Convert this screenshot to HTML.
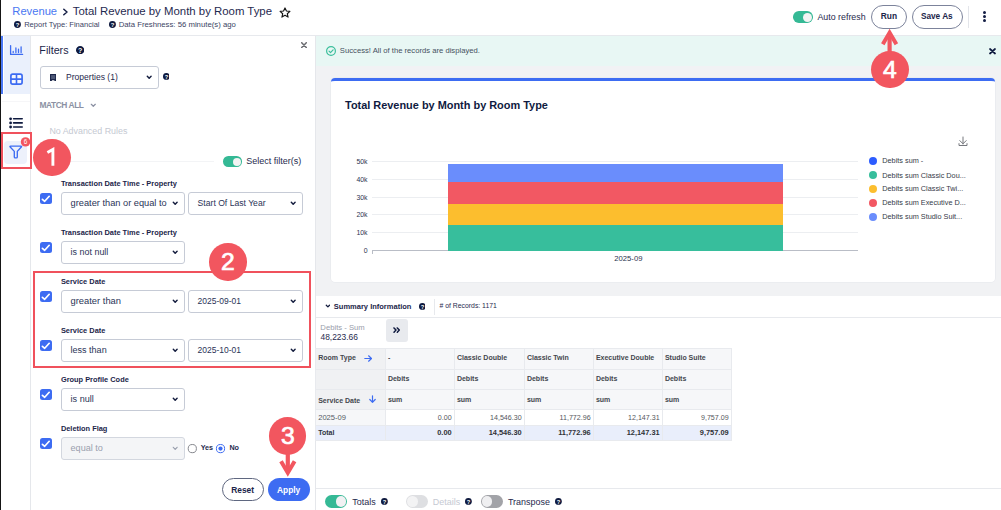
<!DOCTYPE html>
<html><head><meta charset="utf-8">
<style>
*{box-sizing:border-box;margin:0;padding:0}
html,body{width:1001px;height:510px;overflow:hidden;background:#fff;font-family:"Liberation Sans",sans-serif}
.a{position:absolute;white-space:nowrap}
.t{line-height:1}
</style></head><body>
<div class="a" style="left:0px;top:0px;width:1.3px;height:510px;background:#151515"></div>
<div class="a" style="left:1px;top:35px;width:1000px;height:1px;background:#e7e9ed"></div>
<div class="a t" style="left:12.32px;top:6.00px;font-size:11.2px;color:#4a78f2;font-weight:normal;">Revenue</div>
<svg class="a" style="left:62px;top:8px" width="7" height="8" viewBox="0 0 7 8"><path d="M1.8 1.2L5 4L1.8 6.8" fill="none" stroke="#141e45" stroke-width="1.5" stroke-linecap="round" stroke-linejoin="round"/></svg>
<div class="a t" style="left:72.80px;top:6.00px;font-size:11.4px;color:#1f2a50;font-weight:normal;">Total Revenue by Month by Room Type</div>
<svg class="a" style="left:279px;top:6.5px" width="12" height="11" viewBox="0 0 24 22"><path d="M12 1.8l2.9 6.3 6.9.7-5.2 4.6 1.5 6.8L12 16.7l-6.1 3.5 1.5-6.8-5.2-4.6 6.9-.7z" fill="none" stroke="#141414" stroke-width="2.3" stroke-linejoin="round"/></svg>
<svg class="a" style="left:14.2px;top:20.9px" width="6.9" height="6.9" viewBox="0 0 20 20"><circle cx="10" cy="10" r="10" fill="#0f1a3f"/><text x="10.2" y="16.3" text-anchor="middle" font-family="Liberation Sans" font-weight="bold" font-size="17" fill="#fff">?</text></svg>
<div class="a t" style="left:24.17px;top:21.00px;font-size:7.55px;color:#3b4463;font-weight:normal;">Report Type: Financial</div>
<svg class="a" style="left:108.7px;top:20.9px" width="6.9" height="6.9" viewBox="0 0 20 20"><circle cx="10" cy="10" r="10" fill="#0f1a3f"/><text x="10.2" y="16.3" text-anchor="middle" font-family="Liberation Sans" font-weight="bold" font-size="17" fill="#fff">?</text></svg>
<div class="a t" style="left:118.66px;top:21.00px;font-size:7.75px;color:#3b4463;font-weight:normal;">Data Freshness: 56 minute(s) ago</div>
<div class="a" style="left:793px;top:11.4px;width:20px;height:11.7px;border-radius:5.85px;background:#35b995"></div>
<div class="a" style="left:802.5px;top:12.6px;width:9.299999999999999px;height:9.299999999999999px;border-radius:50%;background:#f3f3f3"></div>
<div class="a t" style="left:817.48px;top:13.00px;font-size:8.83px;color:#1f2a4e;font-weight:normal;">Auto refresh</div>
<div class="a" style="left:871.2px;top:5.2px;width:35.8px;height:23.4px;border:1px solid #7c839b;border-radius:12px"></div>
<div class="a t" style="left:880.81px;top:12.00px;font-size:8.4px;color:#1b2549;font-weight:bold;">Run</div>
<div class="a" style="left:911.9px;top:5.2px;width:50.9px;height:23.4px;border:1px solid #7c839b;border-radius:12px"></div>
<div class="a t" style="left:920.92px;top:13.00px;font-size:8.25px;color:#1b2549;font-weight:bold;">Save As</div>
<div class="a" style="left:968px;top:6px;width:1px;height:22px;background:#e3e5ea"></div>
<div class="a" style="left:983px;top:11.1px;width:3px;height:3px;border-radius:50%;background:#141e45"></div>
<div class="a" style="left:983px;top:14.899999999999999px;width:3px;height:3px;border-radius:50%;background:#141e45"></div>
<div class="a" style="left:983px;top:18.7px;width:3px;height:3px;border-radius:50%;background:#141e45"></div>
<div class="a" style="left:4.2px;top:36px;width:25.8px;height:58px;background:#eaf0fc"></div>
<div class="a" style="left:1px;top:36px;width:2px;height:58px;background:#4a78f5"></div>
<div class="a" style="left:2px;top:100.5px;width:28px;height:1px;background:#f6f6f8"></div>
<div class="a" style="left:30px;top:36px;width:1px;height:474px;background:#e5e7eb"></div>
<svg class="a" style="left:0px;top:36px" width="30" height="58" viewBox="0 36 30 58"><path d="M10.6 45.6V54.4H22.6" fill="none" stroke="#3d6cf2" stroke-width="1.3" stroke-linecap="round" stroke-linejoin="round"/><path d="M13.2 52.6V51.4M15.9 52.6V47.9M18.5 52.6V49.2M21.1 52.6V46.8" stroke="#3d6cf2" stroke-width="1.3" stroke-linecap="round"/><rect x="10.9" y="74.1" width="11.2" height="10" rx="1.8" fill="#fff" fill-opacity="0.55" stroke="#3d6cf2" stroke-width="1.7"/><path d="M16.5 74.1v10M10.9 79.1h11.2" stroke="#3d6cf2" stroke-width="1.6"/></svg>
<svg class="a" style="left:8.7px;top:117.2px" width="14" height="12" viewBox="0 0 14 12"><circle cx="1.6" cy="1.8" r="1.4" fill="#0f1a3f"/><circle cx="1.6" cy="5.9" r="1.4" fill="#0f1a3f"/><circle cx="1.6" cy="10" r="1.4" fill="#0f1a3f"/><path d="M4.6 1.8H13.2M4.6 5.9H13.2M4.6 10H13.2" stroke="#0f1a3f" stroke-width="1.6" stroke-linecap="round"/></svg>
<div class="a" style="left:4.2px;top:140.6px;width:22.7px;height:23.4px;border-radius:4px;background:#edf1fb"></div>
<svg class="a" style="left:0px;top:130px" width="30" height="35" viewBox="0 130 30 35"><path d="M10.6 146.1H20.9Q22 146.1 21.3 147L17.3 151.4V157Q17.3 157.9 16.4 157.9H15.2Q14.3 157.9 14.3 157V151.4L10.2 147Q9.5 146.1 10.6 146.1z" fill="none" stroke="#3d6cf2" stroke-width="1.35" stroke-linejoin="round"/></svg>
<svg class="a" style="left:20px;top:136px" width="11" height="11" viewBox="0 0 11 11"><circle cx="5.5" cy="5.9" r="4.7" fill="#f2565f"/><text x="5.5" y="8.2" text-anchor="middle" font-family="Liberation Sans" font-size="6.3" fill="#fff">6</text></svg>
<div class="a" style="left:1px;top:131.6px;width:31px;height:37.2px;border:2px solid #f0515c"></div>
<div class="a" style="left:315px;top:36px;width:1px;height:474px;background:#e5e7eb"></div>
<div class="a t" style="left:39.35px;top:45.00px;font-size:10.73px;color:#1b2549;font-weight:normal;">Filters</div>
<svg class="a" style="left:75.9px;top:45.5px" width="8.3" height="8.3" viewBox="0 0 20 20"><circle cx="10" cy="10" r="10" fill="#0f1a3f"/><text x="10.2" y="16.3" text-anchor="middle" font-family="Liberation Sans" font-weight="bold" font-size="17" fill="#fff">?</text></svg>
<svg class="a" style="left:301.3px;top:41.6px" width="6" height="6.2" viewBox="0 0 6 6.2"><path d="M0.7 0.7L5.3 5.5M5.3 0.7L0.7 5.5" stroke="#6a6b70" stroke-width="1.5" stroke-linecap="round"/></svg>
<div class="a" style="left:40.2px;top:66.3px;width:118.5px;height:22.4px;border:1px solid #c6cbd6;border-radius:3px"></div>
<svg class="a" style="left:50px;top:73.8px" width="6.3" height="7.4" viewBox="0 0 6.3 7.4"><path d="M0 0.3Q0 0 0.3 0H6Q6.3 0 6.3 0.3V7.4H4.4V6.2H1.9V7.4H0z" fill="#1b2549"/><rect x="1.1" y="1.1" width="4.1" height="4" fill="#4f5978"/></svg>
<div class="a t" style="left:66.00px;top:73.00px;font-size:8.55px;color:#1f2a4e;font-weight:normal;">Properties (1)</div>
<svg class="a" style="left:145.6px;top:75.3px" width="6.4" height="4.6" viewBox="-1 -1 6.4 4.6"><path d="M0.3 0.3L2.2 2.3000000000000003L4.1000000000000005 0.3" fill="none" stroke="#111a3c" stroke-width="1.4" stroke-linecap="round" stroke-linejoin="round"/></svg>
<svg class="a" style="left:162.6px;top:73.3px" width="6.8" height="6.8" viewBox="0 0 20 20"><circle cx="10" cy="10" r="10" fill="#0f1a3f"/><text x="10.2" y="16.3" text-anchor="middle" font-family="Liberation Sans" font-weight="bold" font-size="17" fill="#fff">?</text></svg>
<div class="a t" style="left:39.41px;top:101.00px;font-size:8.4px;color:#8b91a3;font-weight:bold;letter-spacing:-0.42px">MATCH ALL</div>
<svg class="a" style="left:89.5px;top:102.5px" width="6.6" height="4.6" viewBox="-1 -1 6.6 4.6"><path d="M0.3 0.3L2.3 2.3000000000000003L4.3 0.3" fill="none" stroke="#8b91a3" stroke-width="1.2" stroke-linecap="round" stroke-linejoin="round"/></svg>
<div class="a t" style="left:49.38px;top:127.00px;font-size:8.88px;color:#c5c9d2;font-weight:normal;">No Advanced Rules</div>
<div class="a" style="left:70px;top:160.5px;width:144px;height:1px;background:#f3f4f6"></div>
<div class="a" style="left:223.3px;top:156.3px;width:18.6px;height:10.6px;border-radius:5.3px;background:#35b995"></div>
<div class="a" style="left:232.50000000000003px;top:157.5px;width:8.2px;height:8.2px;border-radius:50%;background:#f3f3f3"></div>
<div class="a t" style="left:246.17px;top:157.00px;font-size:9.03px;color:#1f2a4e;font-weight:normal;">Select filter(s)</div>
<div class="a t" style="left:60.88px;top:180.00px;font-size:7.42px;color:#1b2549;font-weight:bold;">Transaction Date Time - Property</div>
<div class="a" style="left:40.2px;top:192.5px;width:11.7px;height:11.5px;border-radius:2.5px;background:#3d6cf2"></div>
<svg class="a" style="left:40.2px;top:192.5px" width="11.7" height="11.5" viewBox="0 0 11.7 11.5"><path d="M2.4 6.3L4.7 8.3L9.2 3.3" fill="none" stroke="#fff" stroke-width="1.7" stroke-linecap="round" stroke-linejoin="round"/></svg>
<div class="a" style="left:61px;top:192px;width:124px;height:23px;border:1px solid #c6cbd6;border-radius:3px;background:#fff"></div>
<div class="a t" style="left:70.55px;top:199.00px;font-size:9.26px;color:#2a3457;font-weight:normal;">greater than or equal to</div>
<svg class="a" style="left:171.7px;top:200.8px" width="6.4" height="4.6" viewBox="-1 -1 6.4 4.6"><path d="M0.3 0.3L2.2 2.3000000000000003L4.1000000000000005 0.3" fill="none" stroke="#111a3c" stroke-width="1.4" stroke-linecap="round" stroke-linejoin="round"/></svg>
<div class="a" style="left:188px;top:192px;width:115px;height:23px;border:1px solid #c6cbd6;border-radius:3px;background:#fff"></div>
<div class="a t" style="left:197.60px;top:199.00px;font-size:8.62px;color:#2a3457;font-weight:normal;">Start Of Last Year</div>
<svg class="a" style="left:289.7px;top:200.8px" width="6.4" height="4.6" viewBox="-1 -1 6.4 4.6"><path d="M0.3 0.3L2.2 2.3000000000000003L4.1000000000000005 0.3" fill="none" stroke="#111a3c" stroke-width="1.4" stroke-linecap="round" stroke-linejoin="round"/></svg>
<div class="a t" style="left:60.88px;top:229.00px;font-size:7.42px;color:#1b2549;font-weight:bold;">Transaction Date Time - Property</div>
<div class="a" style="left:40.2px;top:241.5px;width:11.7px;height:11.5px;border-radius:2.5px;background:#3d6cf2"></div>
<svg class="a" style="left:40.2px;top:241.5px" width="11.7" height="11.5" viewBox="0 0 11.7 11.5"><path d="M2.4 6.3L4.7 8.3L9.2 3.3" fill="none" stroke="#fff" stroke-width="1.7" stroke-linecap="round" stroke-linejoin="round"/></svg>
<div class="a" style="left:61px;top:241px;width:124px;height:23px;border:1px solid #c6cbd6;border-radius:3px;background:#fff"></div>
<div class="a t" style="left:70.57px;top:248.00px;font-size:8.95px;color:#2a3457;font-weight:normal;">is not null</div>
<svg class="a" style="left:171.7px;top:249.8px" width="6.4" height="4.6" viewBox="-1 -1 6.4 4.6"><path d="M0.3 0.3L2.2 2.3000000000000003L4.1000000000000005 0.3" fill="none" stroke="#111a3c" stroke-width="1.4" stroke-linecap="round" stroke-linejoin="round"/></svg>
<div class="a t" style="left:60.88px;top:278.00px;font-size:7.42px;color:#1b2549;font-weight:bold;">Service Date</div>
<div class="a" style="left:40.2px;top:290.5px;width:11.7px;height:11.5px;border-radius:2.5px;background:#3d6cf2"></div>
<svg class="a" style="left:40.2px;top:290.5px" width="11.7" height="11.5" viewBox="0 0 11.7 11.5"><path d="M2.4 6.3L4.7 8.3L9.2 3.3" fill="none" stroke="#fff" stroke-width="1.7" stroke-linecap="round" stroke-linejoin="round"/></svg>
<div class="a" style="left:61px;top:290px;width:124px;height:23px;border:1px solid #c6cbd6;border-radius:3px;background:#fff"></div>
<div class="a t" style="left:70.54px;top:297.00px;font-size:9.37px;color:#2a3457;font-weight:normal;">greater than</div>
<svg class="a" style="left:171.7px;top:298.8px" width="6.4" height="4.6" viewBox="-1 -1 6.4 4.6"><path d="M0.3 0.3L2.2 2.3000000000000003L4.1000000000000005 0.3" fill="none" stroke="#111a3c" stroke-width="1.4" stroke-linecap="round" stroke-linejoin="round"/></svg>
<div class="a" style="left:188px;top:290px;width:115px;height:23px;border:1px solid #c6cbd6;border-radius:3px;background:#fff"></div>
<div class="a t" style="left:197.60px;top:297.00px;font-size:8.5px;color:#2a3457;font-weight:normal;">2025-09-01</div>
<svg class="a" style="left:289.7px;top:298.8px" width="6.4" height="4.6" viewBox="-1 -1 6.4 4.6"><path d="M0.3 0.3L2.2 2.3000000000000003L4.1000000000000005 0.3" fill="none" stroke="#111a3c" stroke-width="1.4" stroke-linecap="round" stroke-linejoin="round"/></svg>
<div class="a t" style="left:60.88px;top:327.00px;font-size:7.42px;color:#1b2549;font-weight:bold;">Service Date</div>
<div class="a" style="left:40.2px;top:339.5px;width:11.7px;height:11.5px;border-radius:2.5px;background:#3d6cf2"></div>
<svg class="a" style="left:40.2px;top:339.5px" width="11.7" height="11.5" viewBox="0 0 11.7 11.5"><path d="M2.4 6.3L4.7 8.3L9.2 3.3" fill="none" stroke="#fff" stroke-width="1.7" stroke-linecap="round" stroke-linejoin="round"/></svg>
<div class="a" style="left:61px;top:339px;width:124px;height:23px;border:1px solid #c6cbd6;border-radius:3px;background:#fff"></div>
<div class="a t" style="left:70.57px;top:346.00px;font-size:9.02px;color:#2a3457;font-weight:normal;">less than</div>
<svg class="a" style="left:171.7px;top:347.8px" width="6.4" height="4.6" viewBox="-1 -1 6.4 4.6"><path d="M0.3 0.3L2.2 2.3000000000000003L4.1000000000000005 0.3" fill="none" stroke="#111a3c" stroke-width="1.4" stroke-linecap="round" stroke-linejoin="round"/></svg>
<div class="a" style="left:188px;top:339px;width:115px;height:23px;border:1px solid #c6cbd6;border-radius:3px;background:#fff"></div>
<div class="a t" style="left:197.60px;top:346.00px;font-size:8.5px;color:#2a3457;font-weight:normal;">2025-10-01</div>
<svg class="a" style="left:289.7px;top:347.8px" width="6.4" height="4.6" viewBox="-1 -1 6.4 4.6"><path d="M0.3 0.3L2.2 2.3000000000000003L4.1000000000000005 0.3" fill="none" stroke="#111a3c" stroke-width="1.4" stroke-linecap="round" stroke-linejoin="round"/></svg>
<div class="a t" style="left:60.88px;top:376.00px;font-size:7.42px;color:#1b2549;font-weight:bold;">Group Profile Code</div>
<div class="a" style="left:40.2px;top:388.5px;width:11.7px;height:11.5px;border-radius:2.5px;background:#3d6cf2"></div>
<svg class="a" style="left:40.2px;top:388.5px" width="11.7" height="11.5" viewBox="0 0 11.7 11.5"><path d="M2.4 6.3L4.7 8.3L9.2 3.3" fill="none" stroke="#fff" stroke-width="1.7" stroke-linecap="round" stroke-linejoin="round"/></svg>
<div class="a" style="left:61px;top:388px;width:124px;height:23px;border:1px solid #c6cbd6;border-radius:3px;background:#fff"></div>
<div class="a t" style="left:70.56px;top:395.00px;font-size:9.1px;color:#2a3457;font-weight:normal;">is null</div>
<svg class="a" style="left:171.7px;top:396.8px" width="6.4" height="4.6" viewBox="-1 -1 6.4 4.6"><path d="M0.3 0.3L2.2 2.3000000000000003L4.1000000000000005 0.3" fill="none" stroke="#111a3c" stroke-width="1.4" stroke-linecap="round" stroke-linejoin="round"/></svg>
<div class="a t" style="left:60.88px;top:425.00px;font-size:7.42px;color:#1b2549;font-weight:bold;">Deletion Flag</div>
<div class="a" style="left:40.2px;top:437.5px;width:11.7px;height:11.5px;border-radius:2.5px;background:#3d6cf2"></div>
<svg class="a" style="left:40.2px;top:437.5px" width="11.7" height="11.5" viewBox="0 0 11.7 11.5"><path d="M2.4 6.3L4.7 8.3L9.2 3.3" fill="none" stroke="#fff" stroke-width="1.7" stroke-linecap="round" stroke-linejoin="round"/></svg>
<div class="a" style="left:61px;top:437px;width:124px;height:23px;border:1px solid #d3d7df;border-radius:3px;background:#f4f5f7"></div>
<div class="a t" style="left:70.56px;top:444.00px;font-size:9.1px;color:#9aa0ae;font-weight:normal;">equal to</div>
<svg class="a" style="left:171.7px;top:445.8px" width="6.4" height="4.6" viewBox="-1 -1 6.4 4.6"><path d="M0.3 0.3L2.2 2.3000000000000003L4.1000000000000005 0.3" fill="none" stroke="#9aa0ae" stroke-width="1.2" stroke-linecap="round" stroke-linejoin="round"/></svg>
<svg class="a" style="left:187px;top:443px" width="11" height="11" viewBox="0 0 11 11"><circle cx="5.3" cy="5.6" r="4.1" fill="#fff" stroke="#85878d" stroke-width="1"/></svg>
<div class="a t" style="left:200.70px;top:444.00px;font-size:7.2px;color:#1f2a4e;font-weight:bold;">Yes</div>
<svg class="a" style="left:215px;top:443px" width="11" height="11" viewBox="0 0 11 11"><circle cx="5.5" cy="5.6" r="4.1" fill="#fff" stroke="#3d6cf2" stroke-width="1"/><circle cx="5.5" cy="5.6" r="2.1" fill="#3d6cf2"/></svg>
<div class="a t" style="left:229.40px;top:444.00px;font-size:7.2px;color:#1f2a4e;font-weight:bold;">No</div>
<div class="a" style="left:221.6px;top:478.4px;width:42.4px;height:23px;border:1px solid #5f6780;border-radius:12px"></div>
<div class="a t" style="left:231.21px;top:486.00px;font-size:8.4px;color:#1b2549;font-weight:bold;">Reset</div>
<div class="a" style="left:267.9px;top:478.4px;width:42.1px;height:23px;border-radius:12px;background:#3d6cf2"></div>
<div class="a t" style="left:277.01px;top:486.00px;font-size:8.4px;color:#fff;font-weight:bold;">Apply</div>
<div class="a" style="left:316px;top:36px;width:685px;height:30px;background:#e8f7f4"></div>
<div class="a" style="left:316px;top:66px;width:685px;height:230px;background:#f1f2f4"></div>
<svg class="a" style="left:325.5px;top:45.8px" width="10" height="10" viewBox="0 0 10 10"><circle cx="5" cy="5" r="4.4" fill="none" stroke="#3cbf9c" stroke-width="1.2"/><path d="M3 5.1l1.5 1.5L7.1 3.9" fill="none" stroke="#3cbf9c" stroke-width="1.2" stroke-linecap="round" stroke-linejoin="round"/></svg>
<div class="a t" style="left:339.86px;top:47.00px;font-size:7.66px;color:#46505e;font-weight:normal;">Success! All of the records are displayed.</div>
<svg class="a" style="left:988.5px;top:48px" width="7" height="6.5" viewBox="0 0 7 6.5"><path d="M1 1L6 5.5M6 1L1 5.5" stroke="#0f1a3f" stroke-width="1.7" stroke-linecap="round"/></svg>
<div class="a" style="left:330.8px;top:77.8px;width:664.6px;height:204px;background:#fff;border-radius:4px;box-shadow:0 0 0 0.6px #e6e8ec"></div>
<div class="a" style="left:330.8px;top:78.2px;width:664.6px;height:5px;border-top:3px solid #3d6cf2;border-radius:4px 4px 0 0"></div>
<div class="a t" style="left:345.03px;top:100.00px;font-size:10.93px;color:#0f1a3f;font-weight:bold;">Total Revenue by Month by Room Type</div>
<svg class="a" style="left:957.5px;top:136px" width="10" height="10.5" viewBox="0 0 10 10.5"><path d="M5 1v7M1.8 4.6L5 7.8L8.2 4.6M1 7.6v1.9h8V7.6" fill="none" stroke="#6f7177" stroke-width="0.95" stroke-linecap="round" stroke-linejoin="round"/></svg>
<div class="a" style="left:372px;top:160.7px;width:486.3px;height:1px;background:#eceef1"></div>
<div class="a" style="left:372px;top:178.6px;width:486.3px;height:1px;background:#eceef1"></div>
<div class="a" style="left:372px;top:196.5px;width:486.3px;height:1px;background:#eceef1"></div>
<div class="a" style="left:372px;top:214.4px;width:486.3px;height:1px;background:#eceef1"></div>
<div class="a" style="left:372px;top:232.3px;width:486.3px;height:1px;background:#eceef1"></div>
<div class="a" style="left:372px;top:250.2px;width:486.3px;height:1px;background:#b9bdc6"></div>
<div class="a" style="left:371.6px;top:250.2px;width:1px;height:4px;background:#b9bdc6"></div>
<div class="a t" style="right:633.50px;top:159.00px;font-size:6.9px;color:#2c3550;font-weight:normal;text-align:right;">50k</div>
<div class="a t" style="right:633.50px;top:177.00px;font-size:6.9px;color:#2c3550;font-weight:normal;text-align:right;">40k</div>
<div class="a t" style="right:633.50px;top:195.00px;font-size:6.9px;color:#2c3550;font-weight:normal;text-align:right;">30k</div>
<div class="a t" style="right:633.50px;top:212.00px;font-size:6.9px;color:#2c3550;font-weight:normal;text-align:right;">20k</div>
<div class="a t" style="right:633.50px;top:230.00px;font-size:6.9px;color:#2c3550;font-weight:normal;text-align:right;">10k</div>
<div class="a t" style="right:633.50px;top:248.00px;font-size:6.9px;color:#2c3550;font-weight:normal;text-align:right;">0</div>
<div class="a" style="left:447.5px;top:164.4px;width:335.2px;height:17.599999999999994px;background:#6a8dfc"></div>
<div class="a" style="left:447.5px;top:182.0px;width:335.2px;height:21.599999999999994px;background:#f25863"></div>
<div class="a" style="left:447.5px;top:203.6px;width:335.2px;height:21.099999999999994px;background:#fcbe2e"></div>
<div class="a" style="left:447.5px;top:224.7px;width:335.2px;height:26.0px;background:#37be9c"></div>
<div class="a t" style="left:614.26px;top:255.00px;font-size:7.7px;color:#2c3550;font-weight:normal;">2025-09</div>
<div class="a" style="left:868.5px;top:157px;width:8px;height:8px;border-radius:50%;background:#2c5cff"></div>
<div class="a t" style="left:882.29px;top:157.00px;font-size:7.3px;color:#353a48;font-weight:normal;">Debits sum -</div>
<div class="a" style="left:868.5px;top:171.2px;width:8px;height:8px;border-radius:50%;background:#37be9c"></div>
<div class="a t" style="left:882.29px;top:172.00px;font-size:7.3px;color:#353a48;font-weight:normal;">Debits sum Classic Dou...</div>
<div class="a" style="left:868.5px;top:185px;width:8px;height:8px;border-radius:50%;background:#fcbe2e"></div>
<div class="a t" style="left:882.29px;top:185.00px;font-size:7.3px;color:#353a48;font-weight:normal;">Debits sum Classic Twi...</div>
<div class="a" style="left:868.5px;top:198.7px;width:8px;height:8px;border-radius:50%;background:#f25863"></div>
<div class="a t" style="left:882.29px;top:199.00px;font-size:7.3px;color:#353a48;font-weight:normal;">Debits sum Executive D...</div>
<div class="a" style="left:868.5px;top:212.6px;width:8px;height:8px;border-radius:50%;background:#6a8dfc"></div>
<div class="a t" style="left:882.29px;top:213.00px;font-size:7.3px;color:#353a48;font-weight:normal;">Debits sum Studio Suit...</div>
<div class="a" style="left:316px;top:317px;width:685px;height:1px;background:#e7e9ed"></div>
<svg class="a" style="left:324.6px;top:304.2px" width="5.8" height="4.2" viewBox="-1 -1 5.8 4.2"><path d="M0.3 0.3L1.9 1.9000000000000001L3.5 0.3" fill="none" stroke="#111a3c" stroke-width="1.3" stroke-linecap="round" stroke-linejoin="round"/></svg>
<div class="a t" style="left:333.87px;top:303.00px;font-size:7.51px;color:#1b2549;font-weight:bold;">Summary Information</div>
<svg class="a" style="left:418.6px;top:303.4px" width="6.8" height="6.8" viewBox="0 0 20 20"><circle cx="10" cy="10" r="10" fill="#0f1a3f"/><text x="10.2" y="16.3" text-anchor="middle" font-family="Liberation Sans" font-weight="bold" font-size="17" fill="#fff">?</text></svg>
<div class="a" style="left:434px;top:299px;width:1px;height:15.5px;background:#e7e9ed"></div>
<div class="a t" style="left:439.52px;top:303.00px;font-size:6.85px;color:#1f2a4e;font-weight:normal;"># of Records: 1171</div>
<div class="a t" style="left:320.36px;top:324.00px;font-size:7.68px;color:#999eab;font-weight:normal;">Debits - Sum</div>
<div class="a t" style="left:320.51px;top:333.00px;font-size:8.41px;color:#1f2a4e;font-weight:normal;">48,223.66</div>
<div class="a" style="left:385.6px;top:319px;width:22px;height:22.6px;border-radius:3px;background:#e8eaee"></div>
<svg class="a" style="left:392.8px;top:327.3px" width="7.5" height="6.2" viewBox="0 0 7.5 6.2"><path d="M1 0.9l2 2.2L1 5.3M4.3 0.9l2 2.2L4.3 5.3" fill="none" stroke="#0f1a3f" stroke-width="1.45" stroke-linecap="round" stroke-linejoin="round"/></svg>
<div class="a" style="left:315px;top:348px;width:417px;height:93px;background:#e8eaee"></div>
<div class="a" style="left:316px;top:349px;width:69px;height:20px;background:#f0f1f3"></div>
<div class="a" style="left:386px;top:349px;width:68px;height:20px;background:#f6f7f9"></div>
<div class="a" style="left:455px;top:349px;width:69px;height:20px;background:#f6f7f9"></div>
<div class="a" style="left:525px;top:349px;width:68px;height:20px;background:#f6f7f9"></div>
<div class="a" style="left:594px;top:349px;width:68px;height:20px;background:#f6f7f9"></div>
<div class="a" style="left:663px;top:349px;width:68px;height:20px;background:#f6f7f9"></div>
<div class="a" style="left:316px;top:370px;width:69px;height:19px;background:#f0f1f3"></div>
<div class="a" style="left:386px;top:370px;width:68px;height:19px;background:#f6f7f9"></div>
<div class="a" style="left:455px;top:370px;width:69px;height:19px;background:#f6f7f9"></div>
<div class="a" style="left:525px;top:370px;width:68px;height:19px;background:#f6f7f9"></div>
<div class="a" style="left:594px;top:370px;width:68px;height:19px;background:#f6f7f9"></div>
<div class="a" style="left:663px;top:370px;width:68px;height:19px;background:#f6f7f9"></div>
<div class="a" style="left:316px;top:390px;width:69px;height:19px;background:#f0f1f3"></div>
<div class="a" style="left:386px;top:390px;width:68px;height:19px;background:#f6f7f9"></div>
<div class="a" style="left:455px;top:390px;width:69px;height:19px;background:#f6f7f9"></div>
<div class="a" style="left:525px;top:390px;width:68px;height:19px;background:#f6f7f9"></div>
<div class="a" style="left:594px;top:390px;width:68px;height:19px;background:#f6f7f9"></div>
<div class="a" style="left:663px;top:390px;width:68px;height:19px;background:#f6f7f9"></div>
<div class="a" style="left:316px;top:410px;width:69px;height:15px;background:#f6f7f9"></div>
<div class="a" style="left:386px;top:410px;width:68px;height:15px;background:#ffffff"></div>
<div class="a" style="left:455px;top:410px;width:69px;height:15px;background:#ffffff"></div>
<div class="a" style="left:525px;top:410px;width:68px;height:15px;background:#ffffff"></div>
<div class="a" style="left:594px;top:410px;width:68px;height:15px;background:#ffffff"></div>
<div class="a" style="left:663px;top:410px;width:68px;height:15px;background:#ffffff"></div>
<div class="a" style="left:316px;top:426px;width:69px;height:14px;background:#e9eefb"></div>
<div class="a" style="left:386px;top:426px;width:68px;height:14px;background:#e9eefb"></div>
<div class="a" style="left:455px;top:426px;width:69px;height:14px;background:#e9eefb"></div>
<div class="a" style="left:525px;top:426px;width:68px;height:14px;background:#e9eefb"></div>
<div class="a" style="left:594px;top:426px;width:68px;height:14px;background:#e9eefb"></div>
<div class="a" style="left:663px;top:426px;width:68px;height:14px;background:#e9eefb"></div>
<div class="a t" style="left:318.21px;top:354.00px;font-size:7.0px;color:#44474e;font-weight:bold;">Room Type</div>
<svg class="a" style="left:363.5px;top:354.5px" width="8.5" height="7" viewBox="0 0 8.5 7"><path d="M0.8 3.5H7.5M4.6 0.8L7.5 3.5L4.6 6.2" fill="none" stroke="#3d6cf2" stroke-width="1.2" stroke-linecap="round" stroke-linejoin="round"/></svg>
<div class="a t" style="left:318.21px;top:397.00px;font-size:7.0px;color:#44474e;font-weight:bold;">Service Date</div>
<svg class="a" style="left:369.3px;top:395px" width="7" height="8" viewBox="0 0 7 8"><path d="M3.5 0.8V7.3M0.8 4.5L3.5 7.3L6.2 4.5" fill="none" stroke="#3d6cf2" stroke-width="1.2" stroke-linecap="round" stroke-linejoin="round"/></svg>
<div class="a t" style="left:387.91px;top:354.00px;font-size:7.0px;color:#44474e;font-weight:bold;">-</div>
<div class="a t" style="left:387.91px;top:375.00px;font-size:7.0px;color:#44474e;font-weight:bold;">Debits</div>
<div class="a t" style="left:387.91px;top:396.00px;font-size:7.0px;color:#44474e;font-weight:bold;">sum</div>
<div class="a t" style="right:549.40px;top:415.00px;font-size:7.1px;color:#55575d;font-weight:normal;text-align:right;">0.00</div>
<div class="a t" style="right:549.40px;top:429.00px;font-size:7.4px;color:#303237;font-weight:bold;text-align:right;">0.00</div>
<div class="a t" style="left:456.91px;top:354.00px;font-size:7.0px;color:#44474e;font-weight:bold;">Classic Double</div>
<div class="a t" style="left:456.91px;top:375.00px;font-size:7.0px;color:#44474e;font-weight:bold;">Debits</div>
<div class="a t" style="left:456.91px;top:396.00px;font-size:7.0px;color:#44474e;font-weight:bold;">sum</div>
<div class="a t" style="right:479.40px;top:415.00px;font-size:7.1px;color:#55575d;font-weight:normal;text-align:right;">14,546.30</div>
<div class="a t" style="right:479.40px;top:429.00px;font-size:7.4px;color:#303237;font-weight:bold;text-align:right;">14,546.30</div>
<div class="a t" style="left:526.91px;top:354.00px;font-size:7.0px;color:#44474e;font-weight:bold;">Classic Twin</div>
<div class="a t" style="left:526.91px;top:375.00px;font-size:7.0px;color:#44474e;font-weight:bold;">Debits</div>
<div class="a t" style="left:526.91px;top:396.00px;font-size:7.0px;color:#44474e;font-weight:bold;">sum</div>
<div class="a t" style="right:410.40px;top:415.00px;font-size:7.1px;color:#55575d;font-weight:normal;text-align:right;">11,772.96</div>
<div class="a t" style="right:410.40px;top:429.00px;font-size:7.4px;color:#303237;font-weight:bold;text-align:right;">11,772.96</div>
<div class="a t" style="left:595.91px;top:354.00px;font-size:7.0px;color:#44474e;font-weight:bold;">Executive Double</div>
<div class="a t" style="left:595.91px;top:375.00px;font-size:7.0px;color:#44474e;font-weight:bold;">Debits</div>
<div class="a t" style="left:595.91px;top:396.00px;font-size:7.0px;color:#44474e;font-weight:bold;">sum</div>
<div class="a t" style="right:341.40px;top:415.00px;font-size:7.1px;color:#55575d;font-weight:normal;text-align:right;">12,147.31</div>
<div class="a t" style="right:341.40px;top:429.00px;font-size:7.4px;color:#303237;font-weight:bold;text-align:right;">12,147.31</div>
<div class="a t" style="left:664.91px;top:354.00px;font-size:7.0px;color:#44474e;font-weight:bold;">Studio Suite</div>
<div class="a t" style="left:664.91px;top:375.00px;font-size:7.0px;color:#44474e;font-weight:bold;">Debits</div>
<div class="a t" style="left:664.91px;top:396.00px;font-size:7.0px;color:#44474e;font-weight:bold;">sum</div>
<div class="a t" style="right:272.40px;top:415.00px;font-size:7.1px;color:#55575d;font-weight:normal;text-align:right;">9,757.09</div>
<div class="a t" style="right:272.40px;top:429.00px;font-size:7.4px;color:#303237;font-weight:bold;text-align:right;">9,757.09</div>
<div class="a t" style="left:318.17px;top:414.00px;font-size:7.6px;color:#555a66;font-weight:normal;">2025-09</div>
<div class="a t" style="left:318.21px;top:429.00px;font-size:7.0px;color:#2f3440;font-weight:bold;">Total</div>
<div class="a" style="left:316px;top:487.5px;width:685px;height:1px;background:#e7e9ed"></div>
<div class="a" style="left:325px;top:495.2px;width:22.4px;height:13px;border-radius:6.5px;background:#35b995"></div>
<div class="a" style="left:335.59999999999997px;top:496.4px;width:10.6px;height:10.6px;border-radius:50%;background:#f1f1f3"></div>
<div class="a t" style="left:352.37px;top:498.00px;font-size:8.96px;color:#1f2a4e;font-weight:normal;">Totals</div>
<svg class="a" style="left:381px;top:498.3px" width="6.8" height="6.8" viewBox="0 0 20 20"><circle cx="10" cy="10" r="10" fill="#0f1a3f"/><text x="10.2" y="16.3" text-anchor="middle" font-family="Liberation Sans" font-weight="bold" font-size="17" fill="#fff">?</text></svg>
<div class="a" style="left:406.2px;top:495.2px;width:21.6px;height:13px;border-radius:6.5px;background:#dedfe2"></div>
<div class="a" style="left:407.4px;top:496.4px;width:10.6px;height:10.6px;border-radius:50%;background:#f3f3f4"></div>
<div class="a t" style="left:432.77px;top:498.00px;font-size:8.96px;color:#c5c9d2;font-weight:normal;">Details</div>
<svg class="a" style="left:464.9px;top:498.3px" width="6.8" height="6.8" viewBox="0 0 20 20"><circle cx="10" cy="10" r="10" fill="#0f1a3f"/><text x="10.2" y="16.3" text-anchor="middle" font-family="Liberation Sans" font-weight="bold" font-size="17" fill="#fff">?</text></svg>
<div class="a" style="left:480.6px;top:495.2px;width:22.1px;height:13px;border-radius:6.5px;background:#a2a3a8"></div>
<div class="a" style="left:481.8px;top:496.4px;width:10.6px;height:10.6px;border-radius:50%;background:#efeff1"></div>
<div class="a t" style="left:507.97px;top:498.00px;font-size:8.96px;color:#1f2a4e;font-weight:normal;">Transpose</div>
<svg class="a" style="left:554.8px;top:498.3px" width="6.8" height="6.8" viewBox="0 0 20 20"><circle cx="10" cy="10" r="10" fill="#0f1a3f"/><text x="10.2" y="16.3" text-anchor="middle" font-family="Liberation Sans" font-weight="bold" font-size="17" fill="#fff">?</text></svg>
<div class="a" style="left:33.3px;top:271px;width:277.3px;height:97.3px;border:2px solid #f0515c"></div>
<div class="a" style="left:33.2px;top:138.5px;width:37.4px;height:37.4px;border-radius:50%;background:#f2565f"></div>
<svg class="a" style="left:41.9px;top:147.2px" width="20" height="20" viewBox="-10 -10 20 20"><path d="M-4.6 -4.6L0.9 -7.6V8.8" fill="none" stroke="#fff" stroke-width="2.9" stroke-linejoin="miter"/></svg>
<div class="a" style="left:209.20000000000002px;top:243.3px;width:37.4px;height:37.4px;border-radius:50%;background:#f2565f"></div>
<div class="a t" style="left:212.9px;top:250.3px;width:30px;text-align:center;font-size:24.7px;font-weight:normal;-webkit-text-stroke:0.7px #fff;color:#fff">2</div>
<div class="a" style="left:269.1px;top:417.2px;width:37.4px;height:37.4px;border-radius:50%;background:#f2565f"></div>
<div class="a t" style="left:272.8px;top:424.2px;width:30px;text-align:center;font-size:24.7px;font-weight:normal;-webkit-text-stroke:0.7px #fff;color:#fff">3</div>
<div class="a" style="left:871.1999999999999px;top:50.599999999999994px;width:37.4px;height:37.4px;border-radius:50%;background:#f2565f"></div>
<div class="a t" style="left:874.9px;top:57.599999999999994px;width:30px;text-align:center;font-size:24.7px;font-weight:normal;-webkit-text-stroke:0.7px #fff;color:#fff">4</div>
<svg class="a" style="left:270px;top:450px" width="36" height="30" viewBox="270 450 36 30"><path d="M287.8 452V472" fill="none" stroke="#f2565f" stroke-width="4.2"/><path d="M281 461.2L287.8 472.7L294.6 461.2" fill="none" stroke="#f2565f" stroke-width="4" stroke-linejoin="miter" stroke-miterlimit="10"/></svg>
<svg class="a" style="left:872px;top:24px" width="36" height="30" viewBox="872 24 36 30"><path d="M889.6 52V33" fill="none" stroke="#f2565f" stroke-width="4.2"/><path d="M882.8 44.2L889.6 32.6L896.4 44.2" fill="none" stroke="#f2565f" stroke-width="4" stroke-linejoin="miter" stroke-miterlimit="10"/></svg>
</body></html>
